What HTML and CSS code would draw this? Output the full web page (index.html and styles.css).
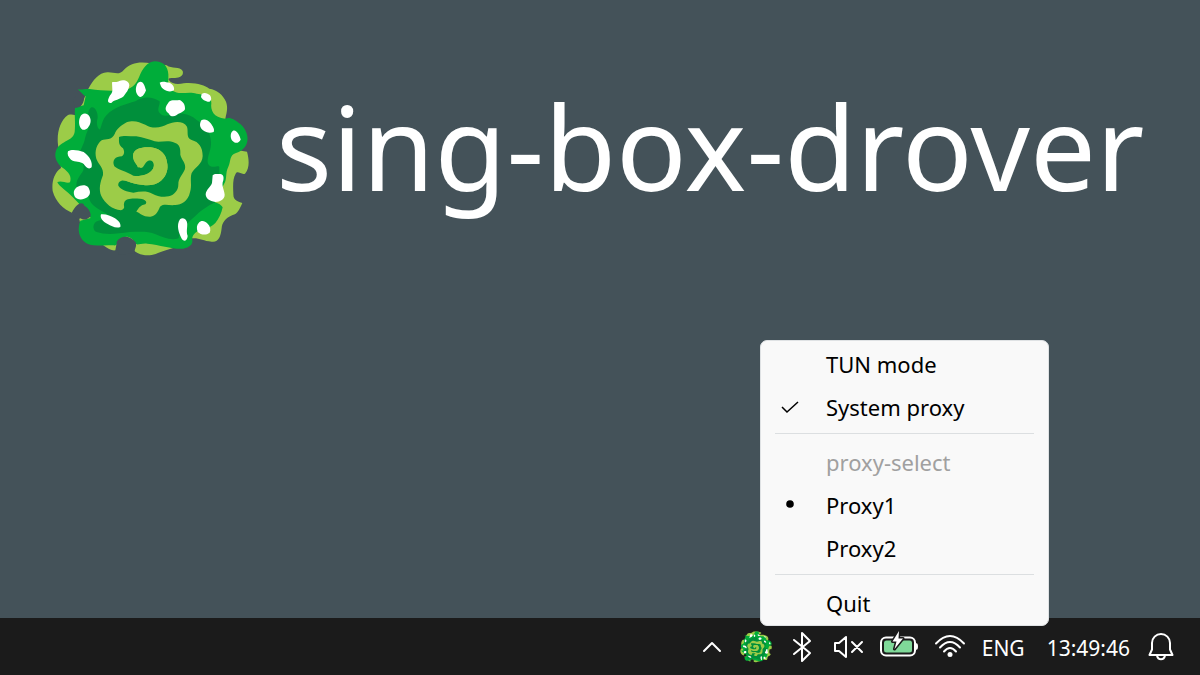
FILE: index.html
```html
<!DOCTYPE html>
<html lang="en">
<head>
  <meta charset="UTF-8">
  <meta name="viewport" content="width=device-width, initial-scale=1.0">
  <title>sing-box-drover</title>
  <link rel="stylesheet" href="styles.css">
</head>
<body>
  <!-- Shared logo, used in the banner and in the tray -->
  <svg class="sprite" aria-hidden="true">
    <symbol id="logo" viewBox="0 0 600 600">
      <path fill="#9ccc48" d="M115 86C130 60 145 39 172 37C193 36 207 48 222 29C242 8 268 4 304 10L350 16C364 28 390 18 398 33C403 50 384 54 371 54C362 54 352 54 357 61C366 74 386 73 401 70C436 66 463 76 478 86C500 89 519 104 528 125C535 145 529 160 526 176L560 270L591 275C597 297 600 325 585 341C573 345 563 330 557 341C548 355 549 380 550 400C549 424 565 424 577 429C569 447 562 463 548 465C526 474 516 489 515 504C512 531 505 548 485 545C460 543 447 533 426 535L390 556C363 568 335 574 317 582C295 590 268 586 253 573L200 550L196 571C186 573 172 565 163 558L95 510L88 478L67 459C40 447 17 426 8 393C5 370 10 340 33 324L24 254C20 220 29 183 54 165C68 161 75 166 80 168Z"/>
      <path fill="#00ad3a" d="M84 87C92 92 102 85 119 87C150 91 180 94 207 91C242 94 259 72 267 52C278 25 291 6 314 4C340 4 354 20 355 43C356 64 350 80 365 91C390 108 412 92 440 101C470 105 485 110 484 130C481 150 490 174 526 176C538 169 556 179 571 192C589 207 595 230 592 244C589 261 576 274 558 279C537 285 543 305 535 320C525 340 532 358 522 372L495 427C506 430 514 435 518 442C514 461 507 476 496 489C477 508 461 503 449 510C432 519 425 529 427 541C429 553 418 563 400 566C370 569 333 555 292 551C270 549 263 558 254 550C248 530 226 525 213 537C201 544 205 558 190 556C160 553 122 563 105 547C85 530 82 506 91 482L122 474L86 430L67 410C55 397 24 377 22 366C35 360 48 371 60 367C66 349 56 337 39 324C21 312 10 290 19 269C35 240 68 245 74 216C77 190 73 172 75 143L101 136L107 109C96 105 89 96 84 87Z"/>
      <path fill="#008f3b" d="M122 143C134 137 144 156 143 174C137 190 144 210 150 208C155 198 157 177 170 165C194 140 228 133 256 124C282 107 308 111 329 124C331 136 317 151 332 162C340 170 351 167 362 164C395 156 421 163 441 181C467 196 482 219 483 246C485 275 462 304 480 318C494 325 507 314 508 322L507 370L495 427C474 438 453 450 432 472C408 493 390 510 386 535C362 543 338 531 317 523C295 513 270 516 238 516C200 522 165 525 140 516C126 511 127 486 145 482C161 477 178 484 192 475L150 450C130 438 118 426 116 411L80 385C75 359 91 349 100 331C105 312 92 306 89 289C89 268 102 255 105 235C111 212 124 193 119 171C111 160 116 150 122 143Z"/>
      <path fill="#9ccc48" d="M194 222C199 208 213 196 230 187C253 179 267 187 286 194C305 207 335 204 352 193C372 183 401 182 411 200C416 216 407 233 425 240C447 246 458 262 458 288C457 314 435 321 425 339C419 358 427 376 420 397C414 424 394 435 376 435C355 437 342 430 330 440C324 454 318 468 301 470C279 471 271 459 259 455C266 445 270 436 286 433C293 426 287 418 270 416C248 415 227 414 223 427C218 439 230 444 213 451C187 449 165 430 154 408C145 387 151 366 159 345C162 322 145 314 139 296C133 273 140 253 155 241C168 235 185 242 194 222Z"/>
      <path fill="#008f3b" d="M207 231C221 225 239 229 259 229C280 232 296 238 314 244C332 248 353 239 374 248C390 253 392 267 391 284C394 299 409 309 405 327C397 346 385 354 385 374C385 392 371 405 356 409C339 413 320 408 307 401C291 392 271 394 250 398C231 395 213 389 205 377C203 364 215 359 229 362C248 370 262 373 280 375C300 377 320 374 333 362C350 348 356 326 351 307C349 284 332 267 310 263C282 260 250 263 249 288C250 302 261 312 263 322C277 326 282 300 294 299C310 298 315 314 309 326C297 344 272 350 250 347C230 335 205 330 193 319C185 301 196 289 216 289C226 281 222 271 219 265C205 255 207 246 207 231Z"/>
      <path fill="#9ccc48" d="M249 288C250 263 282 260 310 263C332 267 349 284 351 307C356 326 350 348 333 362C320 374 300 377 280 375C250 372 230 363 218 360L215 344C238 352 259 348 270 347C290 346 308 338 312 318C315 304 304 299 295 302C284 307 281 325 272 324C257 315 249 302 249 288Z"/>
      <g fill="#fff">
        <path d="M186 67C193 64 200 68 208 63C222 58 237 63 238 76C236 91 228 99 221 109C208 120 194 119 185 128C177 131 171 126 176 115C179 104 188 101 187 89Z"/>
        <path d="M271 65C281 65 285 80 288 91C284 101 278 112 270 111C260 107 255 92 259 79C261 70 265 66 271 65Z"/>
        <path d="M329 68C337 62 349 67 359 68C369 74 374 81 372 91C362 97 349 94 340 87C333 83 332 75 329 68Z"/>
        <path d="M357 125C366 118 377 123 388 120C400 124 406 135 405 148C399 159 387 158 379 166C371 171 360 170 357 161C344 152 346 144 350 136Z"/>
        <path d="M455 102C462 96 473 99 480 106C485 114 485 122 478 125C469 126 455 118 453 110Z"/>
        <path d="M454 181C463 175 475 181 482 190C488 199 495 208 491 216C480 221 468 218 459 211C450 204 447 193 454 181Z"/>
        <path d="M549 212C559 207 570 226 572 239C567 249 557 252 549 244C541 238 539 219 549 212Z"/>
        <path d="M95 164C103 158 112 159 118 169C125 181 122 194 113 204C105 212 94 211 90 200C85 188 87 172 95 164Z"/>
        <path d="M54 274C66 267 84 271 101 276C119 289 128 306 125 321C117 331 107 321 101 312C90 302 77 308 63 299C54 292 51 281 54 274Z"/>
        <path d="M80 382C92 374 107 373 114 381C121 392 123 401 113 411C99 421 82 420 75 411C68 398 72 389 80 382Z"/>
        <path d="M153 463C166 461 182 467 195 475C206 482 214 492 211 501C197 506 184 498 173 492C158 485 149 474 153 463Z"/>
        <path d="M488 346C494 339 503 343 511 342C520 343 522 351 520 361C513 378 523 388 524 404C524 418 511 425 496 426C479 423 468 417 467 403C469 388 482 381 486 369Z"/>
        <path d="M390 478C396 472 406 474 410 484C415 497 407 512 413 528C412 541 403 547 396 538C386 519 378 495 390 478Z"/>
        <path d="M446 489C453 481 463 481 473 491C481 499 483 509 479 518C468 527 453 525 443 516C439 505 440 495 446 489Z"/>
      </g>
      <path class="notch" d="M75 143C91 146 106 128 101 105L88 92L70 120ZM65 459C82 426 98 425 103 437C116 443 125 461 121 470C112 475 105 484 91 475L82 480ZM200 545C213 523 242 527 257 547C262 561 251 568 255 580L205 584C206 569 199 560 200 545Z"/>
    </symbol>
  </svg>

  <header class="banner">
    <svg class="banner-logo" role="img" aria-label="Logo"><use href="#logo"/></svg>
    <h1>sing-box-drover</h1>
  </header>

  <footer class="taskbar">
    <form class="menu">
      <label class="menu-item">
        <input type="checkbox" name="tun">
        <svg class="mark" viewBox="0 0 18 18"><path d="M1 9l5 5L17 4"/></svg>
        TUN mode
      </label>
      <label class="menu-item">
        <input type="checkbox" name="system" checked>
        <svg class="mark" viewBox="0 0 18 18"><path d="M1 9l5 5L17 4"/></svg>
        System proxy
      </label>
      <hr>
      <div class="menu-item disabled">proxy-select</div>
      <label class="menu-item">
        <input type="radio" name="proxy" checked>
        <svg class="mark" viewBox="0 0 18 18"><circle cx="9" cy="8" r="3.8"/></svg>
        Proxy1
      </label>
      <label class="menu-item">
        <input type="radio" name="proxy">
        <svg class="mark" viewBox="0 0 18 18"><circle cx="9" cy="8" r="3.8"/></svg>
        Proxy2
      </label>
      <hr>
      <button type="button" class="menu-item">Quit</button>
    </form>

    <button class="tray-btn" aria-label="Show hidden icons">
      <svg width="24" height="32" viewBox="0 0 24 32"><path d="M4 20l8-8 8 8"/></svg>
    </button>
    <button class="tray-btn tray-app" aria-label="sing-box-drover">
      <svg width="32" height="32"><use href="#logo"/></svg>
    </button>
    <button class="tray-btn" aria-label="Bluetooth">
      <svg width="28" height="32" viewBox="0 0 28 32"><path d="M6 9l16 13-8 8V2l8 8L6 23"/></svg>
    </button>
    <button class="tray-btn" aria-label="Volume muted">
      <svg width="32" height="32" viewBox="0 0 32 32"><path d="M3 12h4l7-6v20l-7-6H3zM20 11l10 10M30 11L20 21"/></svg>
    </button>
    <button class="tray-btn" aria-label="Battery charging">
      <svg width="38" height="32" viewBox="0 0 38 32">
        <rect x="1" y="6.500" width="34" height="18" rx="5"/>
        <rect class="charge" x="4" y="9.500" width="28" height="12" rx="2.500"/>
        <path class="solid" d="M35 12c2.500 0 3 1 3 3.500s-.5 3.500-3 3.500z"/>
        <path class="bolt" d="M19 0L12.500 10.500h4L14.500 18l8.500-10.500h-4.500z"/>
      </svg>
    </button>
    <button class="tray-btn" aria-label="Wi-Fi">
      <svg width="32" height="32" viewBox="0 0 32 32">
        <path d="M2 12.500q14-15 28 0M6 16.500q10-11 20 0M10 20.500q6-7 12 0"/>
        <circle class="solid" cx="16" cy="23.500" r="2.500"/>
      </svg>
    </button>
    <span class="tray-text lang">ENG</span>
    <time class="tray-text clock">13:49:46</time>
    <button class="tray-btn" aria-label="Notifications">
      <svg width="26" height="32" viewBox="0 0 26 32"><path d="M1.500 24L4 18.500V12a9 9 0 0 1 18 0v6.500L24.500 24zM9 24.500c1 5 7 5 8 0"/></svg>
    </button>
  </footer>
</body>
</html>
```
FILE: styles.css
```css
* {
  box-sizing: border-box;
}

body {
  margin: 0;
  min-height: 100vh;
  display: flex;
  flex-direction: column;
  background-color: #445259;
  font-family: "Noto Sans", "Segoe UI", sans-serif;
  font-size: 22px;
}

.sprite {
  position: absolute;
  width: 0;
  height: 0;
}

.notch {
  fill: var(--behind, #445259);
}

.banner {
  display: flex;
  align-items: flex-start;
  gap: 26px;
  padding: 60px 50px;
}

.banner-logo {
  flex: none;
  width: 200px;
  height: 200px;
}

.banner h1 {
  margin: 0;
  color: #fff;
  font-size: 117px;
  font-weight: 400;
  line-height: 172px;
  white-space: nowrap;
}

/* Taskbar */
.taskbar {
  position: relative;
  display: flex;
  align-items: center;
  justify-content: flex-end;
  gap: 16px;
  height: 57px;
  margin-top: auto;
  padding: 0 26px;
  background-color: #1b1b1b;
  color: #fff;
}

.tray-btn {
  display: flex;
  padding: 0;
  border: none;
  background: none;
}

.tray-btn svg {
  fill: none;
  stroke: #fff;
  stroke-width: 2;
  stroke-linejoin: round;
  stroke-linecap: round;
}

.tray-app {
  --behind: #1b1b1b;
}

.tray-app svg {
  stroke: none;
}

.tray-btn .solid {
  fill: #fff;
  stroke: none;
}

.tray-btn .charge {
  fill: #7fd999;
  stroke: none;
}

.tray-btn .bolt {
  fill: #fff;
  stroke: #1b1b1b;
  stroke-width: 3;
  paint-order: stroke;
}

.tray-text {
  padding-top: 2px;
  font-size: 21px;
  line-height: 32px;
}

.lang {
  margin-right: 6px;
}

.clock {
  margin-right: 2px;
}

/* Tray menu */
.menu {
  position: absolute;
  right: 151px;
  bottom: 49px;
  width: 289px;
  padding: 2px 0 0;
  border: 1px solid #dfe2e4;
  border-radius: 7px;
  background-color: #f9f9f9;
  color: #000;
}

.menu-item {
  position: relative;
  display: block;
  width: 100%;
  height: 43px;
  padding: 0 20px 0 65px;
  border: none;
  background: none;
  color: inherit;
  font: inherit;
  line-height: 43px;
  text-align: left;
}

.menu-item input {
  position: absolute;
  margin: 0;
  opacity: 0;
}

.disabled {
  color: #a0a0a0;
}

.mark {
  position: absolute;
  top: 12px;
  left: 20px;
  width: 18px;
  height: 18px;
  visibility: hidden;
}

.mark path {
  fill: none;
  stroke: #000;
  stroke-width: 1.5;
}

input:checked + .mark {
  visibility: visible;
}

.menu hr {
  height: 1px;
  margin: 4px 14px 7px;
  border: none;
  background-color: #dcdfe1;
}
```
